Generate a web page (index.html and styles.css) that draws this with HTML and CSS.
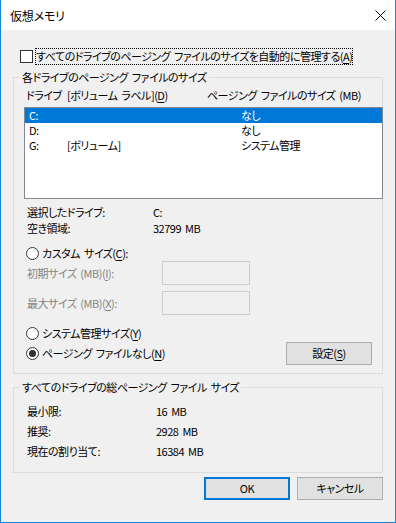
FILE: index.html
```html
<!DOCTYPE html>
<html lang="ja">
<head>
  <meta charset="UTF-8">
  <meta name="viewport" content="width=device-width, initial-scale=1.0">
  <title>仮想メモリ</title>
  <link rel="stylesheet" href="styles.css">
</head>
<body>
  <div class="window">
    <div class="titlebar">
      <span class="title">仮想メモリ</span>
      <span class="close">
        <svg width="11" height="11" viewBox="0 0 11 11"><path d="M0.5 0.5L10.5 10.5M10.5 0.5L0.5 10.5" stroke="#000" stroke-width="1" fill="none"/></svg>
      </span>
    </div>
    <div class="content">
      <div class="auto-row">
        <span class="checkbox"></span>
        <span class="focus">すべてのドライブのページング ファイルのサイズを自動的に管理する(<u>A</u>)</span>
      </div>

      <fieldset class="group drives">
        <legend>各ドライブのページング ファイルのサイズ</legend>
        <div class="list-head">
          <span class="h1">ドライブ</span>
          <span class="h2">[ボリューム ラベル](<u>D</u>)</span>
          <span>ページング ファイルのサイズ (MB)</span>
        </div>
        <ul class="listbox">
          <li class="selected"><span class="d">C:</span><span class="l"></span><span>なし</span></li>
          <li><span class="d">D:</span><span class="l"></span><span>なし</span></li>
          <li><span class="d">G:</span><span class="l">[ボリューム]</span><span>システム管理</span></li>
        </ul>
        <div class="info">
          <div class="kv"><span class="k">選択したドライブ:</span><span>C:</span></div>
          <div class="kv"><span class="k">空き領域:</span><span>32799 MB</span></div>
        </div>
        <div class="radio-row custom">
          <span class="radio"></span>
          <span>カスタム サイズ(<u>C</u>):</span>
        </div>
        <div class="size-row">
          <span class="size-label">初期サイズ (MB)(<u>I</u>):</span>
          <span class="edit"></span>
        </div>
        <div class="size-row second">
          <span class="size-label">最大サイズ (MB)(<u>X</u>):</span>
          <span class="edit"></span>
        </div>
        <div class="radio-row system">
          <span class="radio"></span>
          <span>システム管理サイズ(<u>Y</u>)</span>
        </div>
        <div class="none-row">
          <div class="radio-row">
            <span class="radio checked"></span>
            <span>ページング ファイルなし(<u>N</u>)</span>
          </div>
          <button class="btn set">設定(<u>S</u>)</button>
        </div>
      </fieldset>

      <fieldset class="group totals">
        <legend>すべてのドライブの総ページング ファイル サイズ</legend>
        <div class="total"><span class="k">最小限:</span><span>16 MB</span></div>
        <div class="total"><span class="k">推奨:</span><span>2928 MB</span></div>
        <div class="total"><span class="k">現在の割り当て:</span><span>16384 MB</span></div>
      </fieldset>

      <div class="actions">
        <button class="btn default">OK</button>
        <button class="btn">キャンセル</button>
      </div>
    </div>
  </div>
</body>
</html>
```

FILE: styles.css
```css
html,body,ul{
  margin: 0;
  padding: 0;
}
ul{
  list-style-type: none;
}
body{
  font-family: "Noto Sans CJK JP", "Noto Sans", sans-serif;
  font-feature-settings: "palt" 1;
  font-size: 11px;
  letter-spacing: -0.5px;
  word-spacing: 2px;
  line-height: 15px;
  white-space: nowrap;
  color: #000;
  background: #fff;
}
u{
  text-decoration-thickness: 1px;
  text-underline-offset: 2px;
}
.window{
  width: 396px;
  height: 523px;
  box-sizing: border-box;
  border: 1px solid #1883d7;
  border-top: none;
  display: flex;
  flex-direction: column;
  background-color: #f0f0f0;
}
.titlebar{
  height: 30px;
  flex: none;
  display: flex;
  align-items: center;
  justify-content: space-between;
  padding: 0 9px;
  background-color: #fff;
}
.title{
  font-size: 12px;
  letter-spacing: -0.2px;
}
.close{
  display: flex;
}
.content{
  padding: 17px 12px 0;
}
.auto-row{
  height: 18px;
  margin-left: 7px;
  display: flex;
  align-items: center;
}
.checkbox{
  width: 13px;
  height: 13px;
  box-sizing: border-box;
  border: 1px solid #333;
  background-color: #fff;
}
.focus{
  margin-left: 2px;
  border: 1px dotted #000;
}
.group{
  margin: 0;
  min-width: 0;
  border: 1px solid #dcdcdc;
}
.group legend{
  padding: 0 2px;
  margin-left: -4px;
  line-height: 15px;
}
.drives{
  margin-top: 5px;
  padding: 3px 10px 8px;
}
.list-head{
  display: flex;
  margin-left: 2px;
}
.h1{
  width: 41px;
}
.h2{
  width: 140px;
}
.listbox{
  margin-top: 4px;
  width: 359px;
  height: 92px;
  box-sizing: border-box;
  border: 1px solid #828790;
  background-color: #fff;
}
.listbox li{
  display: flex;
  height: 15px;
  padding-left: 4px;
}
.listbox li.selected{
  background-color: #0078d7;
  color: #fff;
}
.listbox .d{
  width: 38px;
}
.listbox .l{
  width: 174px;
}
.info{
  margin-top: 5px;
}
.kv{
  display: flex;
  line-height: 16px;
  margin-left: 3px;
}
.kv .k{
  width: 126px;
}
.radio-row{
  display: flex;
  align-items: center;
  height: 16px;
  margin-left: 2px;
  gap: 3px;
}
.custom{
  margin-top: 9px;
}
.system{
  margin-top: 10px;
}
.radio{
  width: 13px;
  height: 13px;
  box-sizing: border-box;
  border: 1px solid #333;
  border-radius: 50%;
  background-color: #fff;
  display: flex;
  align-items: center;
  justify-content: center;
}
.radio.checked::after{
  content: "";
  width: 7px;
  height: 7px;
  border-radius: 50%;
  background-color: #333;
}
.size-row{
  display: flex;
  align-items: center;
  height: 24px;
  margin-left: 3px;
  color: #838383;
}
.size-row.second{
  margin-top: 6px;
}
.size-label{
  width: 135px;
}
.edit{
  width: 88px;
  height: 24px;
  box-sizing: border-box;
  border: 1px solid #cccccc;
  background-color: #f0f0f0;
}
.none-row{
  margin-top: 1px;
  display: flex;
  align-items: center;
  justify-content: space-between;
}
.btn{
  font: inherit;
  font-feature-settings: "palt" 1;
  letter-spacing: inherit;
  color: #000;
  height: 23px;
  padding: 0;
  box-sizing: border-box;
  border: 1px solid #adadad;
  background-color: #e1e1e1;
}
.set{
  width: 86px;
}
.totals{
  margin-top: 6px;
  padding: 6px 10px 11px;
}
.total{
  display: flex;
  line-height: 20px;
  margin-left: 3px;
}
.total .k{
  width: 129px;
}
.actions{
  margin-top: 4px;
  display: flex;
  justify-content: flex-end;
  gap: 7px;
}
.actions .btn{
  width: 86px;
}
.btn.default{
  border: 2px solid #0078d7;
}
```
